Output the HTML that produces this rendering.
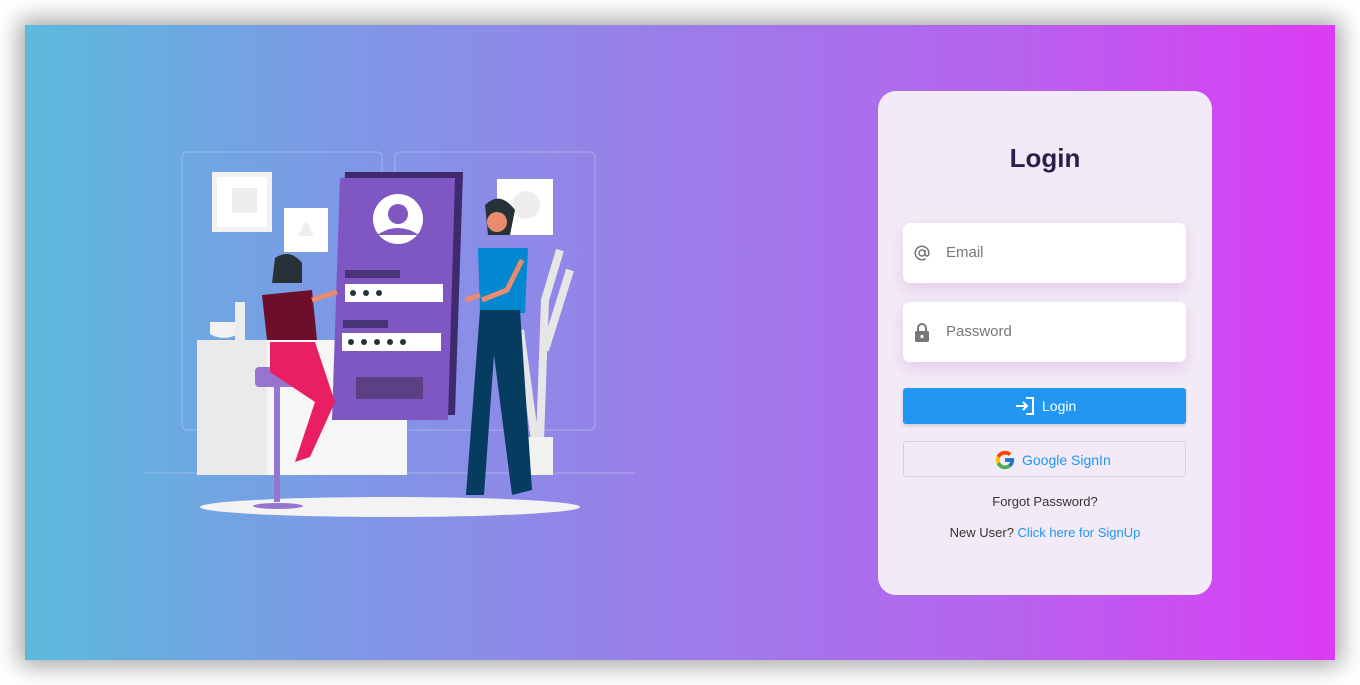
<!DOCTYPE html>
<html><head><meta charset="utf-8"><style>
*{margin:0;padding:0;box-sizing:border-box}
body{width:1360px;height:685px;background:#fff;font-family:"Liberation Sans",sans-serif;overflow:hidden;position:relative}
.main{position:absolute;left:25px;top:25px;width:1310px;height:635px;background:linear-gradient(90deg,#5bbadc 0%,#7f97e6 25%,#9c7de9 50%,#b663ee 75%,#dc3bf5 100%);box-shadow:0 0 22px 6px rgba(0,0,0,.35)}
.card{position:absolute;left:878px;top:91px;width:334px;height:504px;background:#f3eaf7;border-radius:18px}
.card h1{position:absolute;top:52px;width:100%;text-align:center;font-size:26px;font-weight:bold;color:#2a1f4a}
.inp{position:absolute;left:25px;width:283px;height:60px;background:#fff;border-radius:7px;box-shadow:0 6px 14px rgba(180,120,200,.25)}
.inp span{position:absolute;left:43px;top:21px;font-size:15px;color:#777}
.btn{position:absolute;left:25px;top:297px;width:283px;height:36px;background:#2196f3;border-radius:3px;color:#fff;font-size:14px;box-shadow:0 2px 3px rgba(0,0,0,.15)}
.gbtn{position:absolute;left:25px;top:350px;width:283px;height:36px;border:1px solid #d8d0dd;border-radius:3px;color:#2196f3;font-size:14px}
.t{position:absolute;width:100%;text-align:center;font-size:13px;color:#333}
</style></head><body>
<div class="main">
<svg style="position:absolute;left:115px;top:115px" width="500" height="390" viewBox="140 140 500 390">
<g fill="none" stroke="#b8c8ee" stroke-width="1" opacity=".6">
<rect x="182" y="152" width="200" height="278" rx="5"/><rect x="395" y="152" width="200" height="278" rx="5"/>
<line x1="145" y1="473" x2="635" y2="473"/></g>
<rect x="212" y="172" width="60" height="60" fill="#f1f1f1"/><rect x="217" y="177" width="50" height="50" fill="#fff"/><rect x="232" y="188" width="25" height="25" fill="#eee"/>
<rect x="284" y="208" width="44" height="44" fill="#fff"/><polygon points="306,220 298,236 314,236" fill="#eee"/>
<rect x="497" y="179" width="56" height="56" fill="#fff"/><circle cx="526" cy="205" r="14" fill="#eee"/>
<rect x="197" y="340" width="70" height="135" fill="#eaeaea"/><rect x="267" y="340" width="140" height="135" fill="#f6f6f6"/>
<path d="M210 322h28v12q-14 8-28 0z" fill="#f2f2f2"/><rect x="235" y="302" width="10" height="38" fill="#ececec"/>
<ellipse cx="390" cy="507" rx="190" ry="10" fill="#f3f3f3"/>
<polygon points="345,172 463,172 455,415 337,415" fill="#3f2a6e"/>
<polygon points="340,178 455,178 448,420 332,420" fill="#7e57c2"/>
<circle cx="398" cy="219" r="25" fill="#fff"/><circle cx="398" cy="214" r="10" fill="#7e57c2"/><path d="M377 235q21-14 42 0" fill="#7e57c2"/>
<rect x="345" y="270" width="55" height="8" fill="#4a3479"/><rect x="345" y="284" width="98" height="18" fill="#fff"/>
<g fill="#263238"><circle cx="353" cy="293" r="3"/><circle cx="366" cy="293" r="3"/><circle cx="379" cy="293" r="3"/>
<circle cx="351" cy="342" r="3"/><circle cx="364" cy="342" r="3"/><circle cx="377" cy="342" r="3"/><circle cx="390" cy="342" r="3"/><circle cx="403" cy="342" r="3"/></g>
<rect x="343" y="320" width="45" height="8" fill="#4a3479"/><rect x="342" y="333" width="99" height="18" fill="#fff"/><g fill="#263238"><circle cx="351" cy="342" r="3"/><circle cx="364" cy="342" r="3"/><circle cx="377" cy="342" r="3"/><circle cx="390" cy="342" r="3"/><circle cx="403" cy="342" r="3"/></g>
<rect x="356" y="377" width="67" height="22" fill="#5b4184"/>
<path d="M540 440l5-140 15-50M535 440l-15-110M545 350l25-80" stroke="#e6e6e6" stroke-width="8" fill="none"/>
<rect x="527" y="437" width="26" height="38" fill="#f1f1f1"/>
<rect x="274" y="372" width="6" height="130" fill="#9575cd"/><rect x="255" y="367" width="45" height="20" rx="4" fill="#9575cd"/><ellipse cx="278" cy="506" rx="25" ry="3" fill="#9575cd"/>
<path d="M262 295l50-5 5 50h-50z" fill="#6d0f2a"/><path d="M312 300l25-8" stroke="#e88b6e" stroke-width="5"/><path d="M275 258q15-10 27 5v20h-30z" fill="#263238"/>
<path d="M270 342h45l20 60-25 55-15 5 20-60-45-30z" fill="#e91e63"/>
<path d="M478 248h50l-3 65h-45z" fill="#0288d1"/><path d="M480 295l-15 5M522 260l-15 30-25 10" stroke="#e88b6e" stroke-width="5" fill="none"/><path d="M480 310h40l12 180-20 5-18-140-10 140h-18z" fill="#063c5f"/>
<path d="M485 205q15-15 30 5l-5 25h-22z" fill="#263238"/><circle cx="497" cy="222" r="10" fill="#e88b6e"/>
</svg>
</div>
<div class="card">
<h1>Login</h1>
<div class="inp" style="top:132px"><svg style="position:absolute;left:10px;top:21px" width="18" height="18" viewBox="0 0 24 24"><circle cx="12" cy="12" r="4" fill="none" stroke="#777" stroke-width="2"/><path d="M16 8v5.5a2.5 2.5 0 0 0 5 0V12a9 9 0 1 0-4 7.5" fill="none" stroke="#777" stroke-width="2"/></svg><span>Email</span></div>
<div class="inp" style="top:211px"><svg style="position:absolute;left:11px;top:20px" width="16" height="20" viewBox="0 0 16 20"><path d="M4 9V6a4 4 0 0 1 8 0v3" fill="none" stroke="#777" stroke-width="2"/><rect x="1" y="9" width="14" height="11" rx="1.5" fill="#777"/><circle cx="8" cy="14.5" r="1.6" fill="#fff"/></svg><span>Password</span></div>
<div class="btn"><svg style="position:absolute;left:112px;top:9px" width="20" height="18" viewBox="0 0 20 18"><path d="M1 9h11M8 5l4 4-4 4M11 1h7v16h-7" fill="none" stroke="#fff" stroke-width="2"/></svg><span style="position:absolute;left:139px;top:10px">Login</span></div>
<div class="gbtn"><svg style="position:absolute;left:90px;top:7px" width="22" height="22" viewBox="0 0 48 48"><path fill="#FFC107" d="M43.6 20H24v8h11.3C33.7 32.7 29.2 36 24 36c-6.6 0-12-5.4-12-12s5.4-12 12-12c3 0 5.8 1.1 7.9 3l5.7-5.7C34 6.1 29.3 4 24 4 13 4 4 13 4 24s9 20 20 20 20-9 20-20c0-1.300-.1-2.7-.4-4z"/><path fill="#FF3D00" d="M6.3 14.7l6.6 4.8C14.7 15.1 19 12 24 12c3 0 5.8 1.1 7.9 3l5.7-5.7C34 6.1 29.3 4 24 4 16.3 4 9.7 8.3 6.3 14.7z"/><path fill="#4CAF50" d="M24 44c5.2 0 9.9-2 13.4-5.2l-6.2-5.2C29.2 35.1 26.7 36 24 36c-5.2 0-9.6-3.3-11.3-8l-6.5 5C9.5 39.6 16.2 44 24 44z"/><path fill="#1976D2" d="M43.6 20H24v8h11.3c-.8 2.2-2.2 4.2-4.1 5.6l6.2 5.2C37 39.2 44 34 44 24c0-1.3-.1-2.7-.4-4z"/></svg><span style="position:absolute;left:118px;top:10px">Google SignIn</span></div>
<div class="t" style="top:403px">Forgot Password?</div>
<div class="t" style="top:434px">New User? <span style="color:#2196f3">Click here for SignUp</span></div>
</div>
</body></html>
